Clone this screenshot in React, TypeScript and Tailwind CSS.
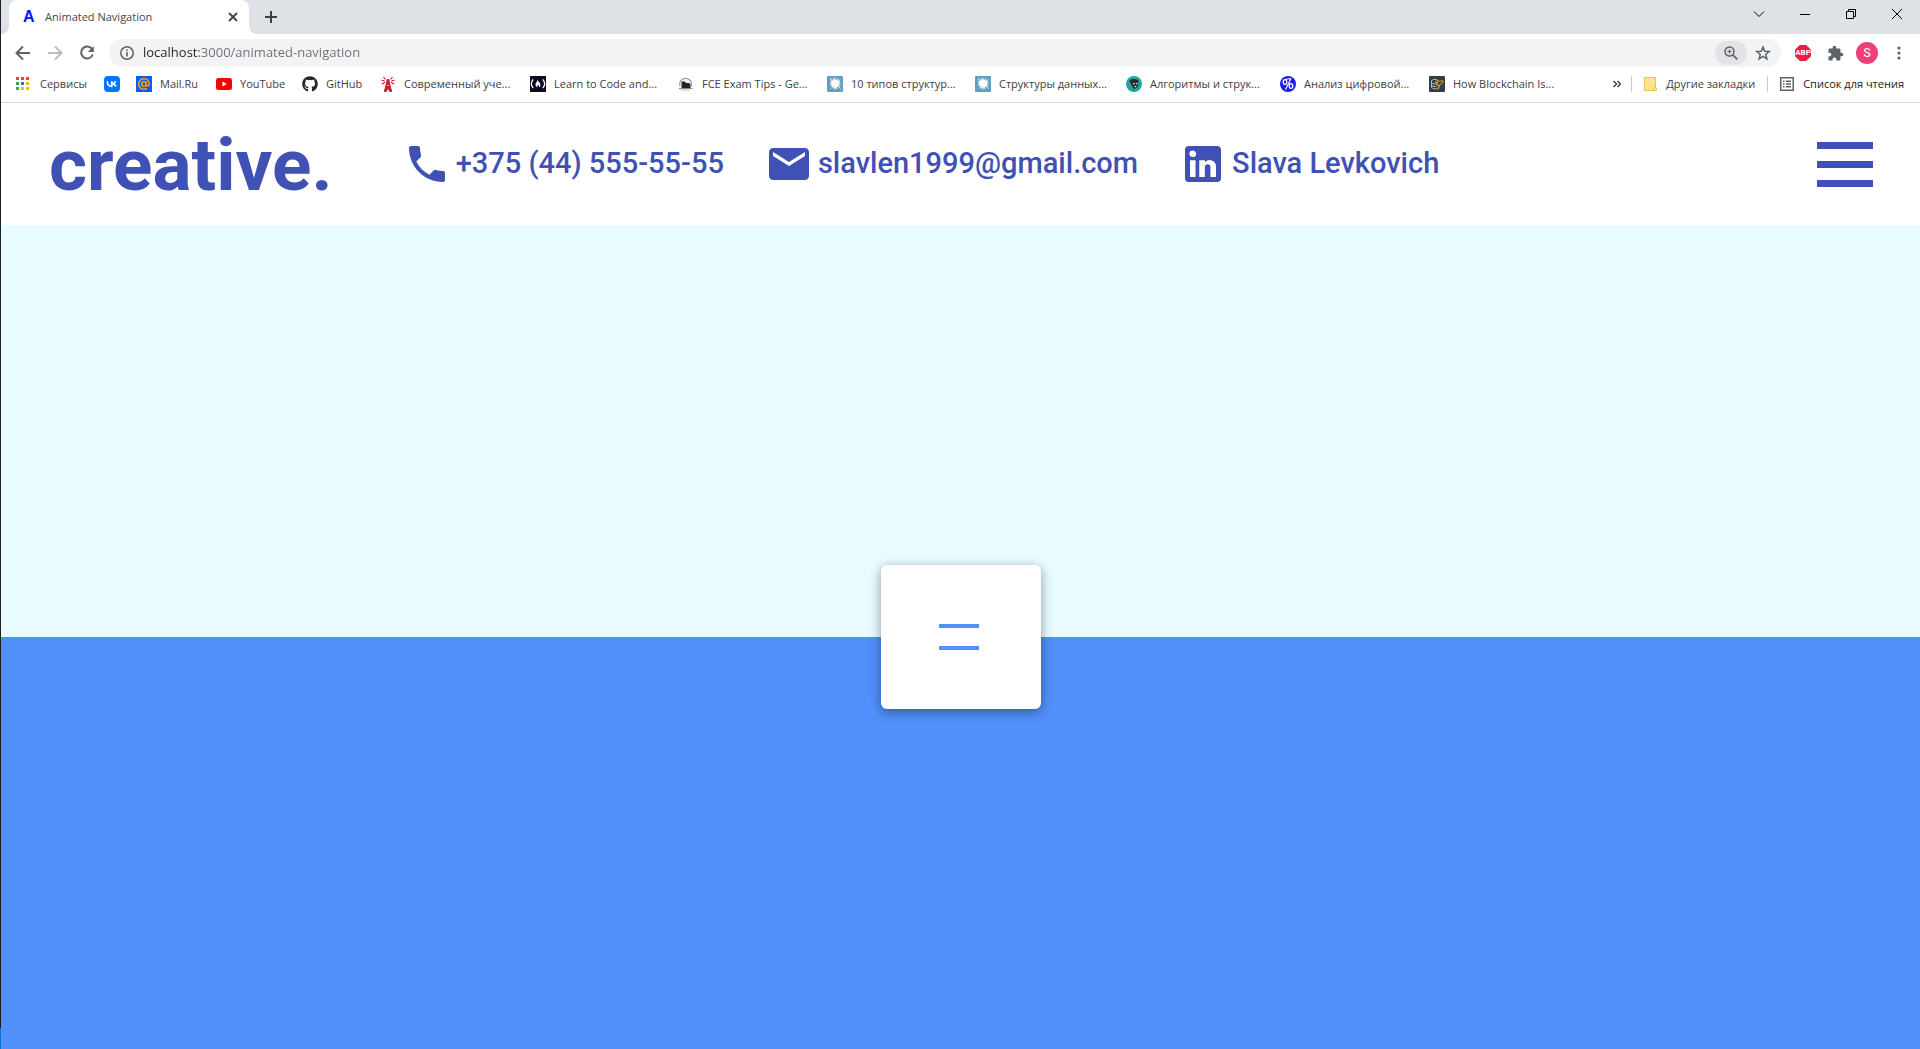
import type { ReactNode } from "react";
import { MdEmail, MdExtension, MdPhone } from "react-icons/md";
import { FaGithub } from "react-icons/fa";

const uiFont = "font-['Open_Sans','Noto_Sans',sans-serif]";

function Stroke({ d, size = 16, width = 2, className = "" }: { d: string; size?: number; width?: number; className?: string }) {
  return (
    <svg width={size} height={size} viewBox={`0 0 ${size} ${size}`} fill="none" stroke="currentColor" strokeWidth={width} className={className} aria-hidden="true">
      <path d={d} />
    </svg>
  );
}

function AppsIcon() {
  const colors = ["#ea4335", "#ea4335", "#ea4335", "#34a853", "#1a73e8", "#fbbc04", "#34a853", "#fbbc04", "#fbbc04"];
  return (
    <svg width="16" height="16" viewBox="0 0 16 16" aria-hidden="true">
      {colors.map((c, i) => (
        <rect key={i} x={(i % 3) * 5} y={Math.floor(i / 3) * 5 + 1} width="3" height="3" fill={c} />
      ))}
    </svg>
  );
}

function VkIcon() {
  return (
    <svg width="16" height="16" viewBox="0 0 16 16" aria-hidden="true">
      <rect width="16" height="16" rx="4" fill="#07f" />
      <path d="M3.2 5.3c.3 3.3 1.8 5.2 4.500 5.200V5.300M7.700 7.900c2 0 3.300-1.200 3.900-2.600M7.700 7.900c2.200 0 3.600 1 4.300 2.600" stroke="#fff" strokeWidth="1.600" fill="none" />
    </svg>
  );
}

function MailRuIcon() {
  return (
    <svg width="16" height="16" viewBox="0 0 16 16" fill="none" stroke="#ff9e00" strokeWidth="1.500" aria-hidden="true">
      <rect width="16" height="16" fill="#005ff9" stroke="none" />
      <circle cx="8" cy="8" r="2.300" />
      <path d="M10.300 5.700v2.800c0 2 3 2 3-.500a5.300 5.300 0 1 0-2.300 4.400" />
    </svg>
  );
}

function YouTubeIcon() {
  return (
    <svg width="16" height="16" viewBox="0 0 16 16" aria-hidden="true">
      <rect y="2" width="16" height="12" rx="2.500" fill="#f00" />
      <path d="M6.400 5.500v5L10.600 8z" fill="#fff" />
    </svg>
  );
}

function TowerIcon() {
  return (
    <svg width="16" height="16" viewBox="0 0 16 16" fill="none" stroke="#c4202e" aria-hidden="true">
      <path d="M7 5h2l2.600 10.500H9.800L8 12l-1.800 3.500H4.400z" fill="#c4202e" />
      <path d="M5.500 3.500 3.500 1M4.800 5 1.500 4.200M5 6.200 2 8M10.500 3.500l2-2.500M11.200 5l3.300-.8M11 6.200l3 1.800" strokeWidth="1.100" />
      <circle cx="8" cy="4.300" r="1.500" fill="#c4202e" stroke="none" />
      <path d="M6.500 9.500h3" stroke="#fff" strokeWidth=".500" />
    </svg>
  );
}

function CampIcon() {
  return (
    <svg width="16" height="16" viewBox="0 0 16 16" fill="none" stroke="#fff" strokeWidth="1.400" aria-hidden="true">
      <rect width="16" height="16" fill="#0a0a23" stroke="none" />
      <path d="M3.200 3.500C.7 6 .7 9.500 3.200 12M12.800 3.500c2.500 2.500 2.500 6 0 8.500" />
      <path d="M7.800 3.800c.3 2.200 2.700 3 2.700 5.200 0 1.200-.7 2-1.500 2.300.3-1.300 0-2-.8-2.600-.8.700-1 1.600-.6 2.600-1.300-.4-2.100-1.400-2.100-2.700 0-1.900 1.600-2.600 2.300-4.800z" fill="#fff" stroke="none" />
    </svg>
  );
}

function BridgeIcon() {
  return (
    <svg width="16" height="16" viewBox="0 0 16 16" fill="none" aria-hidden="true">
      <path d="M2 10.500a6 6 0 1 1 11.200 0" stroke="#9a9a9a" strokeWidth="1.300" />
      <path d="M3.500 5.500h3.500l1 1.500h3l1.500 1v4h-9z" fill="#222" />
      <path d="M1 12.500h13.500" stroke="#8a8a8a" />
      <path d="M3 14h9" stroke="#bbb" />
    </svg>
  );
}

function SplatIcon() {
  return (
    <svg width="16" height="16" viewBox="0 0 16 16" fill="#fff" stroke="#fff" strokeWidth="1" aria-hidden="true">
      <rect width="16" height="16" rx="1" fill="#62a0bf" stroke="none" />
      <circle cx="8.200" cy="7.600" r="3.600" />
      <path d="m3 2.500 10.500 10M13 3.500 4 12.500M8 2v11.500M3 7h10.500M6 2.500l4 10.500M10.700 2.500 6.500 12.500M3 9.500l10-4.500M3.500 5l9.800 4.500" />
    </svg>
  );
}

function FaceIcon() {
  return (
    <svg width="16" height="16" viewBox="0 0 16 16" aria-hidden="true">
      <circle cx="8" cy="8" r="8" fill="#26a69a" />
      <path d="M3.500 5C5 2.500 9 2.500 12.500 4.500l-.6 5.500c-.8 2.500-3 3.500-4.700 2.300L5.500 9z" fill="#262b2f" />
      <path d="M7 7h1.800v1.200H7zM10 7h1.500v1.200H10zM8 10.500l1.400-.8 1.300.8-1.200 1z" fill="#d8dddd" />
    </svg>
  );
}

function PercentIcon() {
  return (
    <svg width="16" height="16" viewBox="0 0 16 16" fill="none" stroke="#fff" strokeWidth="1.200" aria-hidden="true">
      <circle cx="8" cy="8" r="8" fill="#1c1cf0" stroke="none" />
      <ellipse cx="5" cy="6" rx="1.800" ry="2.400" />
      <ellipse cx="11" cy="10" rx="1.800" ry="2.400" />
      <path d="M11 2.500 5.500 13.500M5 3.500l6-1" />
    </svg>
  );
}

function ChainIcon() {
  return (
    <svg width="16" height="16" viewBox="0 0 16 16" fill="none" aria-hidden="true">
      <rect width="16" height="16" rx="1" fill="#2f3e46" />
      <path d="M2.500 4.500c2-1.500 5-1.500 6.500 0M2.500 4.500v7c1.500 1.500 4 1.800 5.500 1M2.500 7c1.500 1 3.500 1.200 5 .8M2.500 9.500c1.500 1 3.500 1.200 5 .8" stroke="#b8c0c4" />
      <path d="M7 5h7.500l-2 3h-1.200L9 13.500 9.800 9H7.500L9 6.500H6.500z" stroke="#d9a520" />
    </svg>
  );
}

const bookmarks: { label: string; name?: string; icon: ReactNode; width: string }[] = [
  { label: "Сервисы", icon: <AppsIcon />, width: "w-[88px]" },
  { label: "", name: "VK", icon: <VkIcon />, width: "w-[32px]" },
  { label: "Mail.Ru", icon: <MailRuIcon />, width: "w-[80px]" },
  { label: "YouTube", icon: <YouTubeIcon />, width: "w-[86px]" },
  { label: "GitHub", icon: <FaGithub size={16} color="#24292e" />, width: "w-[78px]" },
  { label: "Современный уче...", icon: <TowerIcon />, width: "w-[150px]" },
  { label: "Learn to Code and...", icon: <CampIcon />, width: "w-[148px]" },
  { label: "FCE Exam Tips - Ge...", icon: <BridgeIcon />, width: "w-[149px]" },
  { label: "10 типов структур...", icon: <SplatIcon />, width: "w-[148px]" },
  { label: "Структуры данных...", icon: <SplatIcon />, width: "w-[151px]" },
  { label: "Алгоритмы и струк...", icon: <FaceIcon />, width: "w-[154px]" },
  { label: "Анализ цифровой...", icon: <PercentIcon />, width: "w-[149px]" },
  { label: "How Blockchain Is...", icon: <ChainIcon />, width: "w-[150px]" },
];

function TabStrip() {
  return (
    <div className="flex h-[34px] bg-[#dee1e6] text-black">
      <Stroke size={8} width={0} d="M8 0v8H0a8 8 0 0 0 8-8z" className="self-end fill-white" />
      <div className="flex w-[240px] items-center rounded-t-lg bg-white pr-2 pl-3.5 text-[#45494d]">
        <span className="w-[22px] font-['Liberation_Sans',sans-serif] text-base leading-4 font-bold text-[#0a14f5]">A</span>
        <span className="flex-1 text-[11px]">Animated Navigation</span>
        <button type="button" aria-label="Close tab" className="flex size-4 items-center justify-center">
          <Stroke size={10} width={2} d="m1 1 8 8M9 1 1 9" />
        </button>
      </div>
      <Stroke size={8} width={0} d="M0 0v8h8a8 8 0 0 1-8-8z" className="self-end fill-white" />
      <button type="button" aria-label="New tab" className="flex w-7 items-center justify-center text-[#3c4043]">
        <Stroke size={12} width={2} d="M6 0v12M0 6h12" />
      </button>
      <div className="ml-auto flex h-7">
        <button type="button" aria-label="Search tabs" className="flex w-[46px] items-center justify-center">
          <Stroke size={12} width={1} d="m1 3.500 5 5 5-5" />
        </button>
        <button type="button" aria-label="Minimise" className="flex w-[46px] items-center justify-center">
          <Stroke size={10} width={1} d="M0 5.500h10" />
        </button>
        <button type="button" aria-label="Restore" className="flex w-[46px] items-center justify-center">
          <Stroke size={10} width={1} d="M.5 2.500h7v7h-7zM2.500 2.500v-2h7v7h-2" />
        </button>
        <button type="button" aria-label="Close window" className="flex w-[46px] items-center justify-center">
          <Stroke size={10} width={1} d="m0 0 10 10M10 0 0 10" />
        </button>
      </div>
    </div>
  );
}

function Toolbar() {
  return (
    <div className="flex h-[34px] items-center pt-1 pr-[5px] pl-1.5 text-[#5f6368]">
      <button type="button" aria-label="Back" className="flex w-8 justify-center">
        <Stroke d="M15 8H2M8 1.500 1.500 8 8 14.500" />
      </button>
      <button type="button" aria-label="Forward" className="flex w-8 justify-center text-[#babcbe]">
        <Stroke d="M1 8h13M8 1.500 14.500 8 8 14.500" />
      </button>
      <button type="button" aria-label="Reload" className="flex w-8 justify-center">
        <svg width="16" height="16" viewBox="0 0 16 16" fill="none" stroke="currentColor" strokeWidth="2" aria-hidden="true">
          <path d="M13 4A6 6 0 1 0 13.800 9.500" />
          <path d="M14.800 1v6h-6z" fill="currentColor" stroke="none" />
        </svg>
      </button>
      <div className="ml-1.5 flex h-7 flex-1 items-center rounded-full bg-[#f1f3f4] pr-[10px] pl-[11px]">
        <button type="button" aria-label="Site information">
          <svg width="14" height="14" viewBox="0 0 14 14" fill="none" stroke="currentColor" aria-hidden="true">
            <circle cx="7" cy="7" r="6.200" strokeWidth="1.500" />
            <path d="M7 6v4.500M7 3.400v1.500" strokeWidth="1.600" />
          </svg>
        </button>
        <input
          type="text"
          aria-label="Address"
          defaultValue="localhost:3000/animated-navigation"
          className="ml-[9px] flex-1 bg-[linear-gradient(90deg,#202124_56px,#6b6f73_56px)] bg-clip-text text-[13px] text-transparent outline-none"
        />
        <button type="button" aria-label="Zoom" className="flex h-6 w-8 items-center justify-center rounded-full bg-[#e2e3e5]">
          <svg width="14" height="14" viewBox="0 0 14 14" fill="none" stroke="currentColor" aria-hidden="true">
            <circle cx="5.500" cy="5.500" r="4.500" strokeWidth="1.500" />
            <path d="m8.800 8.800 4.500 4.500" strokeWidth="1.700" />
            <path d="M5.500 3.500v4M3.500 5.500h4" strokeWidth="1.100" />
          </svg>
        </button>
        <button type="button" aria-label="Bookmark this page" className="ml-2">
          <Stroke size={16} width={1.5} d="m8 2 1.700 4.200 4.500.3-3.500 2.900 1.200 4.400L8 11.400l-3.900 2.400 1.200-4.400-3.500-2.900 4.500-.3z" />
        </button>
      </div>
      <div className="ml-1.5 flex">
        <button type="button" aria-label="AdBlock Plus" className="flex w-8 items-center justify-center">
          <span className="flex size-4 items-center justify-center bg-[#ed1e45] font-['Roboto',sans-serif] text-[8px] leading-none font-bold text-white [clip-path:polygon(30%_0,70%_0,100%_30%,100%_70%,70%_100%,30%_100%,0_70%,0_30%)]">ABP</span>
        </button>
        <button type="button" aria-label="Extensions" className="flex w-8 items-center justify-center">
          <MdExtension size={17} />
        </button>
        <button type="button" aria-label="Profile" className="flex w-8 items-center justify-center">
          <span className="flex size-[22px] items-center justify-center rounded-full bg-[#ec407a] font-['Roboto',sans-serif] text-xs text-white">S</span>
        </button>
        <button type="button" aria-label="Menu" className="flex w-8 items-center justify-center">
          <svg width="4" height="14" viewBox="0 0 4 14" fill="currentColor" aria-hidden="true">
            <circle cx="2" cy="2" r="1.600" />
            <circle cx="2" cy="7" r="1.600" />
            <circle cx="2" cy="12" r="1.600" />
          </svg>
        </button>
      </div>
    </div>
  );
}

function BookmarksBar() {
  return (
    <nav aria-label="Bookmarks" className="flex h-[35px] items-center border-b border-[#d9dadc] pr-4 pb-0.5 pl-[15px] text-[11px] whitespace-nowrap text-[#3c4043]">
      {bookmarks.map((b, i) => (
        <a key={i} href="#" aria-label={b.name} className={`flex shrink-0 items-center gap-2 ${b.width}`}>
          <span className="size-4 shrink-0">{b.icon}</span>
          {b.label}
        </a>
      ))}
      <button type="button" aria-label="More bookmarks" className="ml-auto">
        <Stroke size={8} width={1.5} d="M.5 1 3.500 4l-3 3M4.500 1l3 3-3 3" />
      </button>
      <span className="ml-2.5 h-4 w-px bg-[#c8cacd]" />
      <a href="#" className="ml-3 flex items-center gap-[9px]">
        <svg width="13" height="14" viewBox="0 0 13 14" aria-hidden="true">
          <path d="M.5.500h11v10l1 1v2H.5z" fill="#ffe48f" stroke="#e8c44a" />
          <path d="M9.500 13.500v-3h2" fill="none" stroke="#e8c44a" />
        </svg>
        Другие закладки
      </a>
      <span className="ml-3 h-4 w-px bg-[#c8cacd]" />
      <button type="button" className="ml-3 flex items-center gap-[9px] text-[#202124]">
        <svg width="14" height="14" viewBox="0 0 14 14" fill="none" stroke="#5f6368" strokeWidth="1.500" aria-hidden="true">
          <path d="M.75.750h12.500v12.500H.750z" />
          <path d="M3 4.200h1.500M3 7h1.500M3 9.800h1.500M5.800 4.200H11M5.800 7H11M5.800 9.800H11" />
        </svg>
        Список для чтения
      </button>
    </nav>
  );
}

function LinkedInIcon() {
  return (
    <svg width="48" height="48" viewBox="0 0 24 24" fill="currentColor" aria-hidden="true">
      <path d="M19 3a2 2 0 0 1 2 2v14a2 2 0 0 1-2 2H5a2 2 0 0 1-2-2V5a2 2 0 0 1 2-2h14m-.5 15.500v-5.300a3.260 3.260 0 0 0-3.260-3.260c-.85 0-1.840.520-2.320 1.300v-1.110h-2.790v8.370h2.790v-4.930c0-.77.620-1.400 1.390-1.400a1.400 1.400 0 0 1 1.400 1.400v4.930h2.790M6.880 8.560a1.680 1.680 0 0 0 1.680-1.680c0-.93-.75-1.690-1.680-1.690a1.690 1.690 0 0 0-1.690 1.690c0 .93.760 1.680 1.690 1.680m1.390 9.940v-8.370H5.500v8.370h2.770z" />
    </svg>
  );
}

function Contact({ href, icon, children }: { href: string; icon: ReactNode; children: ReactNode }) {
  return (
    <a href={href} className="flex items-center gap-[5px] text-[29px] leading-[46px] font-medium whitespace-nowrap">
      {icon}
      <span className="pb-0.5">{children}</span>
    </a>
  );
}

function SiteHeader() {
  return (
    <header className="flex h-[122px] items-center bg-white pr-[47px] pl-12 font-['Roboto',sans-serif] text-[#3f51b5]">
      <a href="#" className="pt-0.5 text-[73px] leading-none font-bold">creative.</a>
      <address className="ml-[70px] flex gap-[41px] not-italic">
        <Contact href="tel:+375445555555" icon={<MdPhone size={48} />}>+375 (44) 555-55-55</Contact>
        <Contact href="mailto:slavlen1999@gmail.com" icon={<MdEmail size={48} />}>slavlen1999@gmail.com</Contact>
        <Contact href="#" icon={<LinkedInIcon />}>Slava Levkovich</Contact>
      </address>
      <button type="button" aria-label="Open navigation" className="ml-auto flex w-14 flex-col gap-3">
        <span className="h-[7px] bg-current" />
        <span className="h-[7px] bg-current" />
        <span className="h-[7px] bg-current" />
      </button>
    </header>
  );
}

export default function App() {
  return (
    <div className="flex min-h-screen">
      <div className="flex w-px flex-col bg-[#0078d4] pb-[21px]">
        <span className="flex-1 bg-[#1e1e1e]" />
      </div>
      <div className="flex min-w-0 flex-1 flex-col overflow-hidden bg-white">
        <div className={uiFont}>
          <TabStrip />
          <Toolbar />
          <BookmarksBar />
        </div>
        <SiteHeader />
        <main className="flex flex-1 items-center justify-center bg-[linear-gradient(#e8fbff_50%,#5190fa_50%)]">
          <button
            type="button"
            aria-label="Toggle menu"
            className="flex h-36 w-40 flex-col items-center justify-center gap-[18px] rounded-md bg-white pr-1 shadow-[0_3px_12px_rgba(0,0,0,0.4)]"
          >
            <span className="h-1 w-10 bg-[#5190fa]" />
            <span className="h-1 w-10 bg-[#5190fa]" />
          </button>
        </main>
      </div>
    </div>
  );
}
